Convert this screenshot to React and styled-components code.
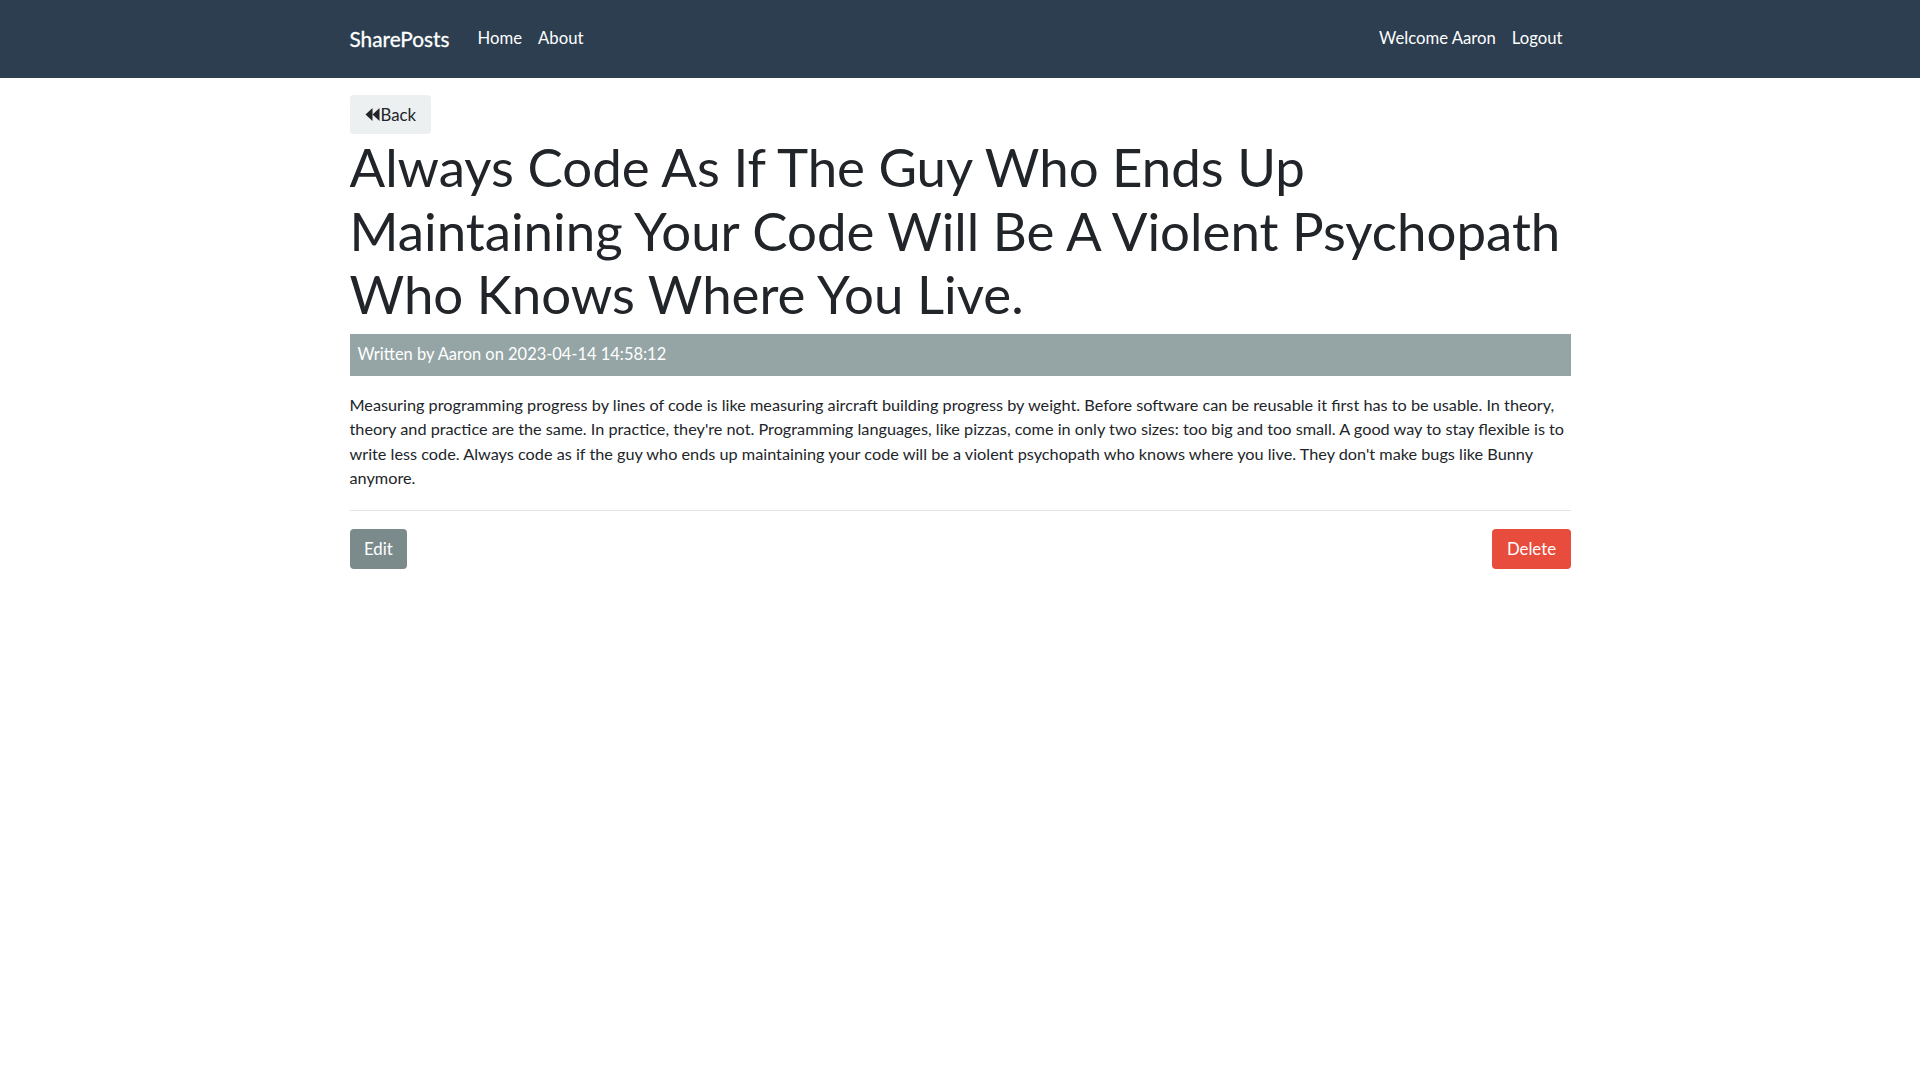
import React from "react";
import styled, { createGlobalStyle } from "styled-components";

const GlobalStyle = createGlobalStyle`
  body {
    margin: 0;
    font-family: Lato, "Open Sans", sans-serif;
    font-size: 16.4px;
    line-height: 1.5;
    color: #212529;
    background: #fff;
  }
  * { box-sizing: border-box; }
`;

const Navbar = styled.nav`
  background: #2c3e50;
  height: 78px;
  display: flex;
  align-items: center;
`;

const Container = styled.div`
  width: 1221px;
  margin: 0 auto;
`;

const NavInner = styled(Container)`
  display: flex;
  align-items: center;
  justify-content: space-between;
  padding-bottom: 1px;
`;

const NavGroup = styled.div`
  display: flex;
  align-items: center;
`;

const Brand = styled.a`
  color: #fff;
  font-size: 20.8px;
  font-weight: 400;
  text-decoration: none;
  margin-right: 20px;
  -webkit-text-stroke: 0.3px #fff;
`;

const NavLink = styled.a`
  color: #fff;
  font-size: 16.7px;
  text-decoration: none;
  padding: 8px;
`;

const Main = styled(Container)`
  padding-top: 17px;
`;

const BackButton = styled.a`
  display: inline-flex;
  align-items: center;
  gap: 1px;
  height: 39px;
  padding: 0 15px;
  background: #ecf0f1;
  color: #212529;
  border-radius: 4px;
  font-size: 16.8px;
  text-decoration: none;
`;

const Title = styled.h1`
  font-size: 52.8px;
  font-weight: 400;
  line-height: 63.5px;
  margin: 1px 0 8px;
`;

const Meta = styled.div`
  background: #95a5a6;
  color: #fff;
  height: 42px;
  display: flex;
  align-items: center;
  padding: 0 8px;
  font-size: 16.45px;
`;

const Body = styled.p`
  margin: 17px 0 0;
  font-size: 16.25px;
  line-height: 24.5px;
`;

const Rule = styled.hr`
  border: 0;
  border-top: 1px solid #e2e4e6;
  margin: 19px 0 18px;
`;

const Actions = styled.div`
  display: flex;
  justify-content: space-between;
`;

const Button = styled.a`
  display: inline-flex;
  align-items: center;
  height: 40px;
  padding: 0 14.5px;
  border-radius: 4px;
  color: #fff;
  font-size: 16.8px;
  text-decoration: none;
  background: ${(p) => p.$bg};
`;

const BackIcon = () => (
  <svg width="15" height="13" viewBox="0 0 14 13" fill="#212529">
    <path d="M7 0 L0 6.5 L7 13 Z" />
    <path d="M14 0 L7 6.5 L14 13 Z" />
  </svg>
);

export default function App() {
  return (
    <>
      <GlobalStyle />
      <Navbar>
        <NavInner>
          <NavGroup>
            <Brand href="#">SharePosts</Brand>
            <NavLink href="#">Home</NavLink>
            <NavLink href="#">About</NavLink>
          </NavGroup>
          <NavGroup>
            <NavLink href="#">Welcome Aaron</NavLink>
            <NavLink href="#">Logout</NavLink>
          </NavGroup>
        </NavInner>
      </Navbar>
      <Main>
        <BackButton href="#">
          <BackIcon />
          Back
        </BackButton>
        <Title>
          Always Code As If The Guy Who Ends Up Maintaining Your Code Will Be A
          Violent Psychopath Who Knows Where You Live.
        </Title>
        <Meta>Written by Aaron on 2023-04-14 14:58:12</Meta>
        <Body>
          Measuring programming progress by lines of code is like measuring
          aircraft building progress by weight. Before software can be reusable
          it first has to be usable. In theory, theory and practice are the
          same. In practice, they're not. Programming languages, like pizzas,
          come in only two sizes: too big and too small. A good way to stay
          flexible is to write less code. Always code as if the guy who ends up
          maintaining your code will be a violent psychopath who knows where
          you live. They don't make bugs like Bunny anymore.
        </Body>
        <Rule />
        <Actions>
          <Button href="#" $bg="#7b8a8b">Edit</Button>
          <Button href="#" $bg="#e74c3c">Delete</Button>
        </Actions>
      </Main>
    </>
  );
}
